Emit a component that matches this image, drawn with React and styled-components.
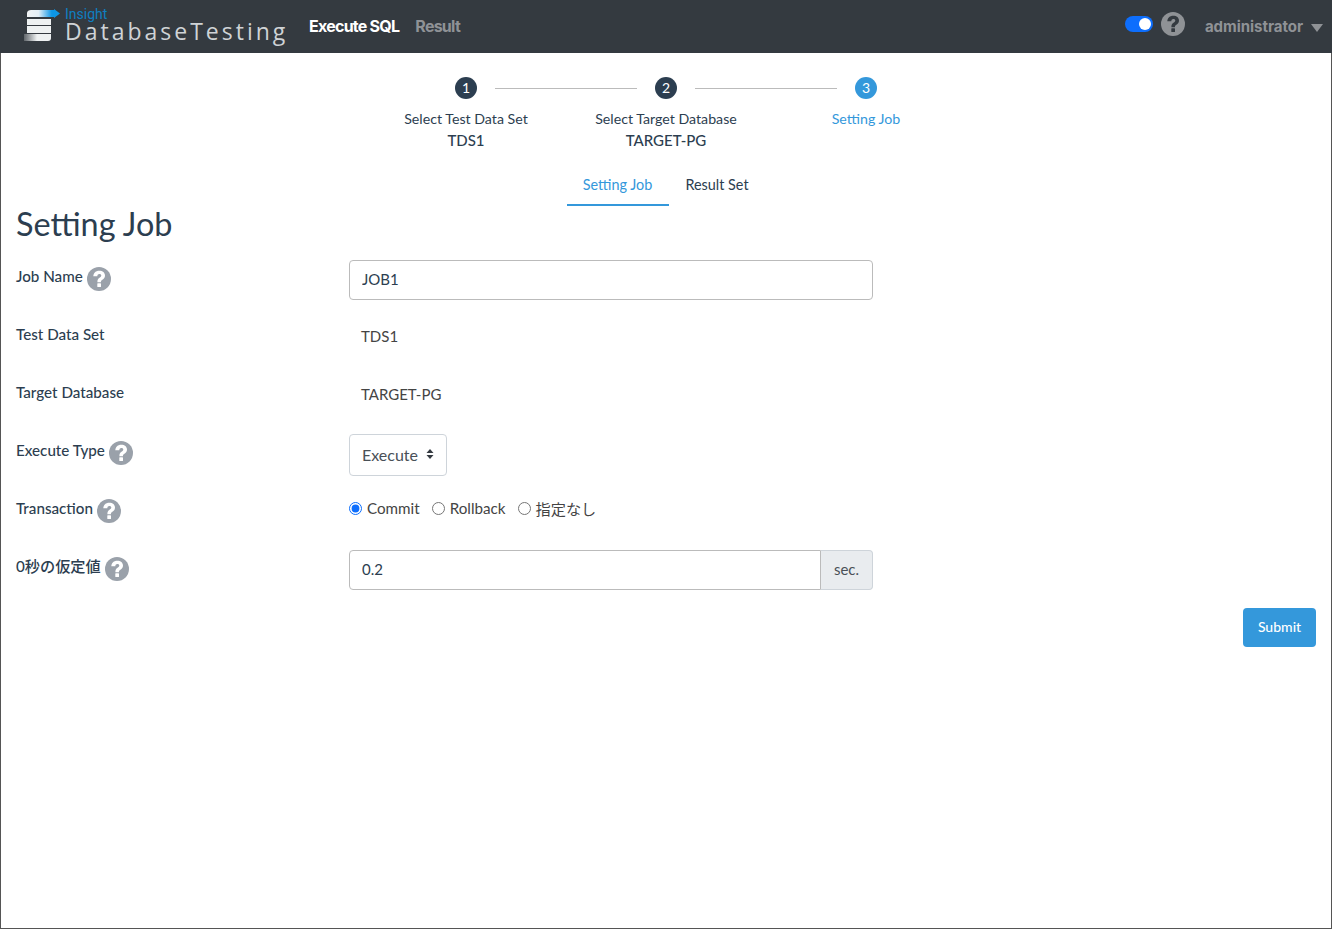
import React from "react";
import styled, { createGlobalStyle } from "styled-components";

const Global = createGlobalStyle`
  html, body { margin: 0; padding: 0; background: #fff; }
  * { box-sizing: border-box; }
  body { font-family: Lato, "Noto Sans CJK JP", sans-serif; font-size: 15px; color: #2c3e50; }
`;

const Page = styled.div`
  height: 929px;
  border: 1px solid #555;
  border-top: 0;
  display: flex;
  flex-direction: column;
`;

const Header = styled.header`
  height: 53px;
  margin: 0 -1px;
  background: #343a40;
  display: flex;
  align-items: center;
  padding: 0 9px 0 24px;
  flex: none;
`;

const Brand = styled.div`
  display: flex;
  align-items: flex-start;
  width: 285px;
  height: 53px;
  padding-top: 8px;
`;

const BrandText = styled.div`
  margin-left: 5px;
  display: flex;
  flex-direction: column;
`;

const BrandTop = styled.span`
  font: 14px/13px Roboto, sans-serif;
  color: #0f7fc0;
`;

const BrandName = styled.span`
  font: 400 23px/20px "Open Sans", sans-serif;
  letter-spacing: 3px;
  color: #cfd3d6;
`;

const Nav = styled.nav`
  display: flex;
  gap: 16px;
  flex: 1;
  margin-top: -2px;
`;

const NavLink = styled.a`
  font: 700 16px/20px Inter, sans-serif;
  letter-spacing: -0.75px;
  color: ${(p) => (p.$active ? "#fff" : "#8f9296")};
`;

const Tools = styled.div`
  display: flex;
  align-items: center;
  gap: 8px;
  margin-bottom: 6px;
  margin-left: -1px;
`;

const Toggle = styled.span`
  width: 28px;
  height: 16px;
  border-radius: 8px;
  background: #0d6efd;
  display: flex;
  align-items: center;
  justify-content: flex-end;
  padding-right: 2px;
`;

const Knob = styled.span`
  width: 12px;
  height: 12px;
  border-radius: 50%;
  background: #fff;
`;

const UserName = styled.span`
  font: 700 15px/20px Inter, sans-serif;
  letter-spacing: -0.03px;
  color: #8f9296;
  margin-left: 20px;
`;

const Caret = styled.span`
  width: 0;
  height: 0;
  border-left: 6px solid transparent;
  border-right: 6px solid transparent;
  border-top: 8px solid #8f9296;
  margin-left: 8px;
  margin-top: 3px;
`;

const Main = styled.main`
  flex: 1;
  padding: 24px 15px 0;
  display: flex;
  flex-direction: column;
`;

const Track = styled.div`
  display: flex;
  align-items: center;
  justify-content: center;
  height: 22px;
`;

const Circle = styled.span`
  width: 22px;
  height: 22px;
  border-radius: 50%;
  background: ${(p) => (p.$active ? "#3498db" : "#2c3e50")};
  color: #fff;
  font-size: 14px;
  line-height: 22px;
  text-align: center;
`;

const Line = styled.span`
  width: 142px;
  height: 1px;
  background: #bbb;
  margin: 0 18px;
`;

const StepLabels = styled.div`
  display: grid;
  grid-template-columns: repeat(3, 200px);
  justify-content: center;
  margin-top: 10px;
  height: 51px;
`;

const StepLabel = styled.div`
  text-align: center;
  font-size: 14.2px;
  line-height: 20px;
  color: ${(p) => (p.$active ? "#3498db" : "#2c3e50")};
`;

const StepValue = styled.div`
  font-size: 15px;
  font-weight: 500;
  line-height: 22px;
`;

const Tabs = styled.div`
  display: flex;
  justify-content: center;
  margin-top: 5px;
  height: 41px;
`;

const Tab = styled.a`
  padding: 9px 0 0;
  font-size: 14.4px;
  line-height: 21px;
  width: ${(p) => p.$w}px;
  text-align: center;
  color: ${(p) => (p.$active ? "#3498db" : "#2c3e50")};
  border-bottom: 2px solid ${(p) => (p.$active ? "#3498db" : "transparent")};
`;

const Title = styled.h1`
  margin: 0;
  font-size: 32.4px;
  font-weight: 400;
  line-height: 36px;
  height: 54px;
`;

const Row = styled.div`
  display: flex;
  height: ${(p) => p.$h}px;
`;

const Label = styled.label`
  width: 333px;
  flex: none;
  display: flex;
  align-items: flex-start;
  gap: 4px;
  font-size: 15.2px;
  font-weight: 500;
  line-height: 20px;
  padding-top: 6px;

  svg {
    margin-top: 1px;
  }
`;

const Field = styled.div`
  width: 524px;
  flex: none;
`;

const Input = styled.input`
  display: block;
  flex: 1;
  width: 100%;
  min-width: 0;
  height: 40px;
  padding: 0 12px 3px;
  font: 15px Lato, sans-serif;
  color: #2c3e50;
  background: #fff;
  border: 1px solid #bbb;
  border-radius: ${(p) => (p.$group ? "4px 0 0 4px" : "4px")};
  outline: none;
`;

const Static = styled.div`
  padding: 6px 12px;
  font-size: 15px;
  line-height: 24px;
  color: #444;
`;

const Select = styled.div`
  width: 98px;
  height: 42px;
  display: flex;
  align-items: center;
  justify-content: space-between;
  padding: 0 12px 2px;
  font-size: 16px;
  color: #495057;
  border: 1px solid #ced4da;
  border-radius: 4px;
`;

const Radios = styled.div`
  display: flex;
  align-items: center;
  gap: 12px;
  height: 24px;
  margin-top: 4px;
`;

const RadioLabel = styled.label`
  display: flex;
  align-items: center;
  gap: 5px;
  font-size: 15.2px;
  color: #444;
`;

const Radio = styled.input`
  margin: 0;
  width: 13px;
  height: 13px;
  accent-color: #0d6efd;
`;

const Group = styled.div`
  display: flex;
`;

const Addon = styled.span`
  width: 52px;
  height: 40px;
  flex: none;
  display: flex;
  align-items: center;
  justify-content: center;
  padding-bottom: 2px;
  font-size: 15px;
  color: #495057;
  background: #e9ecef;
  border: 1px solid #ced4da;
  border-left: 0;
  border-radius: 0 4px 4px 0;
`;

const Actions = styled.div`
  display: flex;
  justify-content: flex-end;
`;

const Submit = styled.button`
  width: 73px;
  height: 39px;
  border: 0;
  padding: 0 0 2px;
  border-radius: 4px;
  background: #3498db;
  color: #fff;
  font: 500 14px Lato, sans-serif;
`;

const Help = ({ size = 24, color = "#9aa1aa", mark = "#fff" }) => (
  <svg width={size} height={size} viewBox="0 0 24 24" style={{ flex: "none" }}>
    <circle cx="12" cy="12" r="12" fill={color} />
    <path d="M6.300 9.200C6.500 5.800 8.800 3.700 12.200 3.700c3.500 0 5.800 2 5.800 4.900 0 2.100-1.100 3.200-2.600 4.200-1.100.8-1.500 1.300-1.500 2.400h-3.500c-.1-2.200.6-3.400 2.100-4.500 1.100-.8 1.800-1.300 1.800-2.200 0-1-.8-1.600-1.900-1.600-1.300 0-2 .8-2.100 2.300z" fill={mark} />
    <rect x="10.300" y="16.300" width="3.700" height="3.700" rx=".5" fill={mark} />
  </svg>
);

const Logo = () => (
  <svg width="36" height="36" viewBox="0 0 36 36" style={{ flex: "none" }}>
    <defs>
      <linearGradient id="top" x1="0" x2="1">
        <stop offset="0" stopColor="#f2f4f5" />
        <stop offset=".35" stopColor="#e3eef5" />
        <stop offset=".75" stopColor="#0d96e6" />
        <stop offset="1" stopColor="#0d96e6" />
      </linearGradient>
      <linearGradient id="bottom" x1="0" x2="1">
        <stop offset="0" stopColor="#343a40" />
        <stop offset=".55" stopColor="#eef1f2" />
        <stop offset="1" stopColor="#eef1f2" />
      </linearGradient>
    </defs>
    <path d="M3 5c0-2 2-3 4-3h23V1l6 4.500-6 4.500V9H3z" fill="url(#top)" />
    <rect x="3" y="11" width="24" height="6" fill="#eef1f2" />
    <rect x="3" y="18" width="24" height="7" fill="#eef1f2" />
    <path d="M-4 26h31v4c0 2-1 3-3 3H-4z" fill="url(#bottom)" />
  </svg>
);

const Arrows = () => (
  <svg width="8" height="12" viewBox="0 0 8 12">
    <path d="M4 1l3.500 4h-7zM4 11L.5 7h7z" fill="#343a40" />
  </svg>
);

export default function App() {
  return (
    <Page>
      <Global />
      <Header>
        <Brand>
          <Logo />
          <BrandText>
            <BrandTop>Insight</BrandTop>
            <BrandName>DatabaseTesting</BrandName>
          </BrandText>
        </Brand>
        <Nav>
          <NavLink $active>Execute SQL</NavLink>
          <NavLink>Result</NavLink>
        </Nav>
        <Tools>
          <Toggle><Knob /></Toggle>
          <Help color="#8f9296" mark="#343a40" />
        </Tools>
        <UserName>administrator</UserName>
        <Caret />
      </Header>
      <Main>
        <Track>
          <Circle>1</Circle>
          <Line />
          <Circle>2</Circle>
          <Line />
          <Circle $active>3</Circle>
        </Track>
        <StepLabels>
          <StepLabel>Select Test Data Set<StepValue>TDS1</StepValue></StepLabel>
          <StepLabel>Select Target Database<StepValue>TARGET-PG</StepValue></StepLabel>
          <StepLabel $active>Setting Job</StepLabel>
        </StepLabels>
        <Tabs>
          <Tab $active $w={102}>Setting Job</Tab>
          <Tab $w={97}>Result Set</Tab>
        </Tabs>
        <Title>Setting Job</Title>
        <Row $h={58}>
          <Label>Job Name <Help /></Label>
          <Field><Input readOnly value="JOB1" /></Field>
        </Row>
        <Row $h={58}>
          <Label>Test Data Set</Label>
          <Field><Static>TDS1</Static></Field>
        </Row>
        <Row $h={58}>
          <Label>Target Database</Label>
          <Field><Static>TARGET-PG</Static></Field>
        </Row>
        <Row $h={58}>
          <Label>Execute Type <Help /></Label>
          <Field>
            <Select>Execute <Arrows /></Select>
          </Field>
        </Row>
        <Row $h={58}>
          <Label>Transaction <Help /></Label>
          <Field>
            <Radios>
              <RadioLabel><Radio type="radio" name="tx" defaultChecked />Commit</RadioLabel>
              <RadioLabel><Radio type="radio" name="tx" />Rollback</RadioLabel>
              <RadioLabel><Radio type="radio" name="tx" />指定なし</RadioLabel>
            </Radios>
          </Field>
        </Row>
        <Row $h={58}>
          <Label>0秒の仮定値 <Help /></Label>
          <Field>
            <Group>
              <Input $group readOnly value="0.2" />
              <Addon>sec.</Addon>
            </Group>
          </Field>
        </Row>
        <Actions><Submit>Submit</Submit></Actions>
      </Main>
    </Page>
  );
}
